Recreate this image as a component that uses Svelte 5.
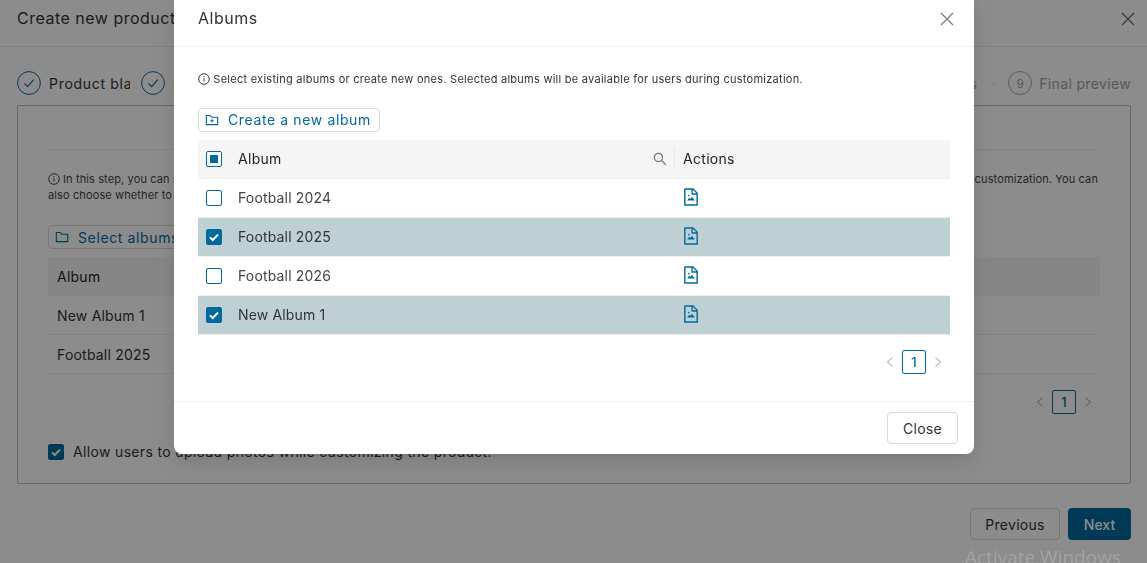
<script>
  const folderPath = "M880 298.4H521L403.7 186.2a8.15 8.15 0 0 0-5.5-2.2H144c-17.7 0-32 14.3-32 32v592c0 17.7 14.3 32 32 32h736c17.7 0 32-14.3 32-32V330.4c0-17.7-14.3-32-32-32zM840 768H184V256h188.5l119.6 114.4H840V768z";
  const plusPath = "M484 443.1V528h-84.5c-4.1 0-7.5 3.1-7.5 7v42c0 3.8 3.4 7 7.5 7H484v84.9c0 3.9 3.2 7.1 7 7.1h42c3.9 0 7-3.2 7-7.1V584h84.5c4.1 0 7.5-3.2 7.5-7v-42c0-3.9-3.4-7-7.5-7H540v-84.9c0-3.9-3.1-7.1-7-7.1h-42c-3.8 0-7 3.2-7 7.1z";
  const filePath = "M553.1 509.1l-77.8 99.2-41.1-52.4a8 8 0 0 0-12.6 0l-99.8 127.2a7.98 7.98 0 0 0 6.3 12.9H696c6.7 0 10.4-7.7 6.3-12.9l-136.5-174a8.1 8.1 0 0 0-12.7 0zM360 442a40 40 0 1 0 80 0 40 40 0 1 0-80 0zm494.6-153.4L639.4 73.4c-6-6-14.1-9.4-22.6-9.4H192c-17.7 0-32 14.3-32 32v832c0 17.7 14.3 32 32 32h640c17.7 0 32-14.3 32-32V311.3c0-8.5-3.4-16.7-9.4-22.7zM790.2 326H602V137.8L790.2 326zm1.8 562H232V136h302v216a42 42 0 0 0 42 42h216v494z";
  const searchPath = "M909.6 854.5L649.9 594.8C690.2 542.7 712 479 712 412c0-80.2-31.3-155.4-87.9-212.1-56.6-56.7-132-87.9-212.1-87.9s-155.5 31.3-212.1 87.9C143.2 256.5 112 331.8 112 412c0 80.1 31.3 155.5 87.9 212.1C256.5 680.8 331.8 712 412 712c67 0 130.6-21.8 182.7-62l259.7 259.6a8.2 8.2 0 0 0 11.6 0l43.6-43.5a8.2 8.2 0 0 0 0-11.6zM570.4 570.4C528 612.7 471.8 636 412 636s-116-23.3-158.4-65.6C211.3 528 188 471.8 188 412s23.3-116.1 65.6-158.4C296 211.3 352.2 188 412 188s116.1 23.2 158.4 65.6S636 352.2 636 412s-23.3 116.1-65.6 158.4z";
  const albums = [
    { name: "Football 2024", on: false },
    { name: "Football 2025", on: true },
    { name: "Football 2026", on: false },
    { name: "New Album 1", on: true }
  ];
</script>

{#snippet info()}
  <svg class="info" viewBox="0 0 12 12" aria-hidden="true"><circle cx="6" cy="6" r="5.3" fill="none" stroke="currentColor" stroke-width="1"/><path d="M6 5.2v3.4M6 3v1.2" stroke="currentColor" stroke-width="1" fill="none"/></svg>
{/snippet}

{#snippet tick()}
  <svg class="tick" viewBox="0 0 16 16" aria-hidden="true"><path d="M4 8.4l2.7 2.6L12 5.6" fill="none" stroke="#fff" stroke-width="2"/></svg>
{/snippet}

{#snippet stepCheck()}
  <svg class="stepc" viewBox="0 0 24 24" aria-hidden="true"><circle cx="12" cy="12" r="11.4" fill="none" stroke="#0a6a9c" stroke-width="1"/><path d="M7.4 12.4l3.3 3.3 6-7" fill="none" stroke="#0a6a9c" stroke-width="1.2"/></svg>
{/snippet}

{#snippet pager()}
  <div class="pager">
    <svg viewBox="0 0 10 12" aria-hidden="true"><path d="M7.5 1.5L2.5 6l5 4.5" fill="none" stroke="#bdbdbd" stroke-width="1.1"/></svg>
    <span class="pnum">1</span>
    <svg viewBox="0 0 10 12" aria-hidden="true"><path d="M2.5 1.5L7.5 6l-5 4.5" fill="none" stroke="#bdbdbd" stroke-width="1.1"/></svg>
  </div>
{/snippet}

<div class="page">
  <header class="top">
    <h1>Create new product</h1>
    <svg class="x" viewBox="0 0 14 14" aria-hidden="true"><path d="M1 1l12 12M13 1L1 13" stroke="#6b6b6b" stroke-width="1.2" fill="none"/></svg>
  </header>

  <div class="steps">
    {@render stepCheck()}
    <span class="slabel clip">Product blank</span>
    {@render stepCheck()}
    <span class="slabel clip">Design</span>
    <span class="last">
      <span class="slabel muted">Albums</span>
      <span class="dash"></span>
      <span class="nine">9</span>
      <span class="slabel muted">Final preview</span>
    </span>
  </div>

  <section class="panel">
    <div class="rule"></div>
    <div class="line l1">
      <span class="iwrap">{@render info()} In this step, you can select albums</span>
      <span>available for users during customization. You can</span>
    </div>
    <div class="line l2">also choose whether to allow users to upload photos.</div>
    <button class="outline bgbtn">
      <svg viewBox="0 0 1024 1024" aria-hidden="true"><path d={folderPath} fill="#0a6a9c"/></svg>
      Select albums
    </button>
    <div class="bghead">Album</div>
    <div class="bgrow">New Album 1</div>
    <div class="bgrow">Football 2025</div>
    <div class="bgpager">{@render pager()}</div>
    <label class="allow">
      <span class="cb on">{@render tick()}</span>
      Allow users to upload photos while customizing the product.
    </label>
  </section>

  <div class="nav">
    <button class="plain">Previous</button>
    <button class="next">Next</button>
  </div>
</div>

<div class="overlay"></div>

<div class="modal">
  <div class="mhead">
    <h2>Albums</h2>
    <svg class="x" viewBox="0 0 14 14" aria-hidden="true"><path d="M1 1l12 12M13 1L1 13" stroke="#7a7a7a" stroke-width="1.2" fill="none"/></svg>
  </div>
  <div class="mbody">
    <p class="hint">{@render info()} Select existing albums or create new ones. Selected albums will be available for users during customization.</p>
    <button class="outline create">
      <svg viewBox="0 0 1024 1024" aria-hidden="true"><path d={plusPath} fill="#006a9e"/><path d={folderPath} fill="#006a9e"/></svg>
      Create a new album
    </button>
    <div class="table">
      <div class="row head">
        <span class="cell"><span class="cb mixed"><i></i></span></span>
        <span class="cell name">Album
          <svg class="search" viewBox="0 0 1024 1024" aria-hidden="true"><path d={searchPath} fill="#7a7a7a"/></svg>
        </span>
        <span class="cell act">Actions</span>
      </div>
      {#each albums as a}
        <div class="row" class:sel={a.on}>
          <span class="cell"><span class="cb" class:on={a.on}>{#if a.on}{@render tick()}{/if}</span></span>
          <span class="cell name">{a.name}</span>
          <span class="cell act">
            <svg class="file" viewBox="0 0 1024 1024" aria-hidden="true"><path d={filePath} fill="#006a9e"/></svg>
          </span>
        </div>
      {/each}
    </div>
    <div class="mpager">{@render pager()}</div>
  </div>
  <div class="mfoot">
    <button class="plain close">Close</button>
  </div>
</div>

<div class="watermark">Activate Windows</div>

<style>
  :global(body) {
    margin: 0;
    overflow: hidden;
    background: #fff;
  }
  :global(#app) {
    font-family: Inter, "Liberation Sans", sans-serif;
    color: #333;
  }
  .page {
    height: 563px;
    overflow: hidden;
    box-sizing: border-box;
    position: relative;
  }
  .top {
    height: 47px;
    box-sizing: border-box;
    border-bottom: 1px solid #eaeaea;
    display: flex;
    align-items: center;
    justify-content: space-between;
    padding: 0 12px 9px 17px;
  }
  h1 {
    margin: -2px 0 0;
    font-size: 16px;
    font-weight: 400;
    letter-spacing: 0.5px;
    white-space: nowrap;
  }
  .top .x { width: 14px; height: 14px; }
  .steps {
    display: flex;
    align-items: center;
    padding: 24px 16px 0 17px;
    height: 24px;
  }
  .stepc { width: 24px; height: 24px; flex: none; }
  .slabel {
    font-size: 14px;
    letter-spacing: 0.7px;
    white-space: nowrap;
  }
  .clip {
    width: 81px;
    overflow: hidden;
    margin: 0 11px 0 8px;
    flex: none;
  }
  .last {
    margin-left: auto;
    display: flex;
    align-items: center;
  }
  .muted { color: #a3a3a3; letter-spacing: 0.35px; }
  .dash { width: 6px; height: 1px; background: #e6e6e6; margin: 0 12px 0 13px; }
  .nine {
    width: 22px;
    height: 22px;
    border: 1px solid #a8a8a8;
    border-radius: 50%;
    display: flex;
    align-items: center;
    justify-content: center;
    font-size: 12px;
    color: #a3a3a3;
    margin-right: 7px;
  }
  .panel {
    margin: 10px 16px 0 17px;
    height: 379px;
    box-sizing: border-box;
    border: 1px solid #bdbdbd;
    border-radius: 2px;
    padding: 43px 30px 0;
  }
  .rule { height: 1px; background: #f0f0f0; }
  .line {
    font-size: 11px;
    line-height: 16px;
    letter-spacing: 0.12px;
    color: #444;
    white-space: nowrap;
  }
  .l1 {
    margin-top: 21px;
    display: flex;
    justify-content: space-between;
    padding-right: 2px;
  }
  .iwrap { display: inline-flex; align-items: center; gap: 3px; }
  .info { width: 12px; height: 12px; vertical-align: -2px; flex: none; }
  button {
    font-family: inherit;
    cursor: pointer;
    background: #fff;
  }
  .outline {
    display: flex;
    align-items: center;
    border: 1px solid #d9d9d9;
    border-radius: 4px;
    color: #006a9e;
    font-size: 14px;
    letter-spacing: 0.62px;
    white-space: nowrap;
  }
  .outline svg { width: 16px; height: 16px; flex: none; }
  .bgbtn {
    margin-top: 22px;
    height: 24px;
    gap: 8px;
    width: 200px;
    padding: 0 0 0 5px;
  }
  .bghead {
    margin-top: 8px;
    height: 38px;
    background: #f5f5f5;
    display: flex;
    align-items: center;
    padding-left: 9px;
    font-size: 14px;
    letter-spacing: 0.25px;
    color: #222;
    border-bottom: 1px solid #f0f0f0;
  }
  .bgrow {
    height: 38px;
    display: flex;
    align-items: center;
    padding-left: 9px;
    font-size: 14px;
    letter-spacing: 0.2px;
    border-bottom: 1px solid #f0f0f0;
  }
  .bgpager {
    display: flex;
    justify-content: flex-end;
    margin-top: 16px;
    margin-right: 7px;
  }
  .pager {
    display: flex;
    align-items: center;
    gap: 7px;
  }
  .pager svg { width: 10px; height: 12px; }
  .pnum {
    width: 22px;
    height: 22px;
    border: 1px solid #006a9e;
    border-radius: 2px;
    color: #006a9e;
    font-size: 13px;
    font-weight: 500;
    display: flex;
    align-items: center;
    justify-content: center;
  }
  .allow {
    margin-top: 29px;
    display: flex;
    align-items: center;
    gap: 9px;
    font-size: 14px;
    letter-spacing: 0.34px;
    color: #333;
    white-space: nowrap;
  }
  .cb {
    width: 16px;
    height: 16px;
    box-sizing: border-box;
    border: 1px solid #006a9e;
    border-radius: 2px;
    background: #fff;
    display: flex;
    align-items: center;
    justify-content: center;
    flex: none;
  }
  .cb.on { background: #006a9e; }
  .cb i { width: 8px; height: 8px; background: #006a9e; display: block; }
  .tick { width: 16px; height: 16px; flex: none; }
  .nav {
    display: flex;
    justify-content: flex-end;
    gap: 8px;
    margin: 24px 16px 0 0;
  }
  .plain {
    border: 1px solid #d9d9d9;
    border-radius: 4px;
    height: 32px;
    width: 90px;
    font-size: 14px;
    letter-spacing: 0.3px;
    color: #333;
  }
  .next {
    border: 0;
    border-radius: 4px;
    height: 32px;
    width: 63px;
    background: #006a9e;
    color: #fff;
    font-size: 14px;
    font-weight: 500;
  }
  .overlay {
    position: fixed;
    inset: 0;
    background: rgba(0, 0, 0, 0.45);
  }
  .modal {
    position: fixed;
    left: 174px;
    top: 0;
    width: 800px;
    height: 454px;
    background: #fff;
    border-radius: 0 0 8px 8px;
    box-shadow: 0 6px 16px rgba(0,0,0,.08), 0 3px 6px -4px rgba(0,0,0,.12), 0 9px 28px 8px rgba(0,0,0,.05);
    display: flex;
    flex-direction: column;
  }
  .mhead {
    flex: none;
    box-sizing: border-box;
    height: 47px;
    border-bottom: 1px solid #f0f0f0;
    display: flex;
    align-items: center;
    justify-content: space-between;
    padding: 0 20px 9px 24px;
  }
  .mhead .x { width: 14px; height: 14px; }
  h2 {
    margin: -2px 0 0;
    font-size: 16px;
    font-weight: 400;
    letter-spacing: 0.5px;
    color: #333;
  }
  .mbody {
    padding: 0 24px;
    flex: 1;
  }
  .hint {
    margin: 24px 0 0;
    font-size: 11px;
    line-height: 16px;
    letter-spacing: 0.26px;
    color: #333;
    white-space: nowrap;
  }
  .create {
    margin-top: 21px;
    height: 24px;
    gap: 8px;
    width: 182px;
    box-sizing: border-box;
    padding: 0 0 2px 5px;
  }
  .create svg { margin-top: 2px; }
  .table { margin-top: 8px; }
  .row {
    display: grid;
    grid-template-columns: 40px 436px 276px;
    height: 38px;
    border-bottom: 1px solid #f0f0f0;
    align-items: center;
    font-size: 14px;
    letter-spacing: 0.16px;
    color: #444;
  }
  .row.head {
    background: #f5f5f5;
    color: #222;
    letter-spacing: 0.3px;
  }
  .row.sel { background: #bfd0d5; color: #333; }
  .cell { padding-left: 8px; display: flex; align-items: center; }
  .name { padding-left: 0; padding-bottom: 2px; justify-content: space-between; }
  .head .name { padding-right: 6px; }
  .search { width: 16px; height: 16px; margin-top: 2px; }
  .head .act {
    border-left: 1px solid #e8e8e8;
    height: 22px;
    padding-bottom: 2px;
    box-sizing: border-box;
  }
  .act { padding-left: 8px; }
  .file { width: 20px; height: 20px; margin: -3px 0 0 -1px; }
  .mpager {
    display: flex;
    justify-content: flex-end;
    margin: 15px 7px 0 0;
  }
  .mfoot {
    height: 52px;
    flex: none;
    border-top: 1px solid #f0f0f0;
    display: flex;
    align-items: center;
    justify-content: flex-end;
    padding: 0 16px;
  }
  .close { width: 71px; }
  .watermark {
    position: fixed;
    left: 965px;
    top: 544px;
    font-family: "Open Sans", sans-serif;
    font-size: 19px;
    color: #a2a2a2;
    white-space: nowrap;
  }
</style>
